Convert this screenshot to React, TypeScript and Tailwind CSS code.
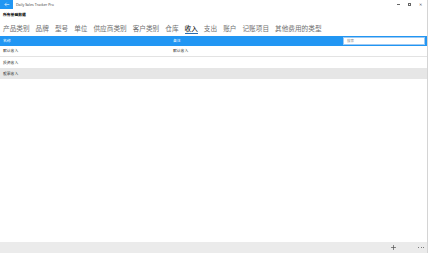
import { Plus } from "lucide-react";

const tabs = [
  "产品类别",
  "品牌",
  "型号",
  "单位",
  "供应商类别",
  "客户类别",
  "仓库",
  "收入",
  "支出",
  "账户",
  "记账项目",
  "其他费用的类型",
];

const rows = [
  { name: "默认收入", note: "默认收入" },
  { name: "投资收入", note: "" },
  { name: "股票收入", note: "" },
];

const cjk = "font-['Noto_Sans_CJK_SC','Noto_Sans',sans-serif]";

export default function App() {
  return (
    <div
      className={`w-[428px] h-[253px] bg-white flex flex-col border-r border-[#d4d4d4] overflow-hidden ${cjk}`}
    >
      {/* title bar */}
      <div className="h-[9px] flex items-center">
        <div className="w-[13px] h-[9px] bg-[#2196f3] flex items-center justify-center">
          <svg width="6" height="5" viewBox="0 0 10 8" fill="none">
            <path d="M9 4H1.5M4.5 1L1.5 4l3 3" stroke="white" strokeWidth="1" />
          </svg>
        </div>
        <span className="ml-[3px] text-[3.6px] leading-none text-[#333] font-['Open_Sans',sans-serif]">
          Daily Sales Tracker Pro
        </span>
        <div className="ml-auto flex items-center gap-[8px] pr-[5px] text-[#444]">
          <div className="w-[3px] h-[0.5px] bg-[#666]" />
          <div className="w-[3px] h-[3px] border-[0.5px] border-[#666]" />
          <span className="text-[3.6px] leading-none text-[#555]">✕</span>
        </div>
      </div>

      {/* heading */}
      <div className="h-[12px] flex items-center px-[3px]">
        <span className="text-[3.8px] leading-none font-bold text-black">所有基础数据</span>
      </div>

      {/* tabs */}
      <div className="h-[15px] flex gap-[6px] px-[3px] pt-[3.5px]">
        {tabs.map((t) => (
          <div key={t} className="flex flex-col">
            <span
              className={`text-[6.65px] leading-[7px] whitespace-nowrap ${
                t === "收入" ? "text-black" : "text-[#707070]"
              }`}
            >
              {t}
            </span>
            {t === "收入" && <div className="mt-[1px] h-[1px] bg-[#2a6db0]" />}
          </div>
        ))}
      </div>

      {/* table header */}
      <div className="h-[10px] flex items-center bg-[#2196f3] text-white">
        <span className="w-[173px] pl-[3px] text-[3.8px] leading-none">名称</span>
        <span className="flex-1 text-[3.8px] leading-none">备注</span>
        <div className="w-[82px] h-[8px] mr-[2px] bg-white border-[0.6px] border-[#9ec9f2] flex items-center pl-[3px]">
          <span className="text-[3.5px] leading-none text-[#888]">搜索</span>
        </div>
      </div>

      {/* rows */}
      {rows.map((r, i) => (
        <div
          key={r.name}
          className={`h-[11px] flex items-center text-[3.8px] leading-none text-[#222] ${
            i === 0 ? "border-b border-[#e3e3e3]" : ""
          } ${i === 2 ? "bg-[#e6e6e6]" : ""}`}
        >
          <span className="w-[173px] pl-[3px]">{r.name}</span>
          <span className="flex-1">{r.note}</span>
        </div>
      ))}

      <div className="flex-1" />

      {/* bottom app bar */}
      <div className="h-[11px] bg-[#ebebeb] flex items-center justify-end pr-[3px] gap-[21px]">
        <Plus size={7} strokeWidth={2.5} className="text-[#555]" />
        <div className="flex gap-[1.5px]">
          <div className="w-[1px] h-[1px] rounded-full bg-[#555]" />
          <div className="w-[1px] h-[1px] rounded-full bg-[#555]" />
          <div className="w-[1px] h-[1px] rounded-full bg-[#555]" />
        </div>
      </div>
    </div>
  );
}
